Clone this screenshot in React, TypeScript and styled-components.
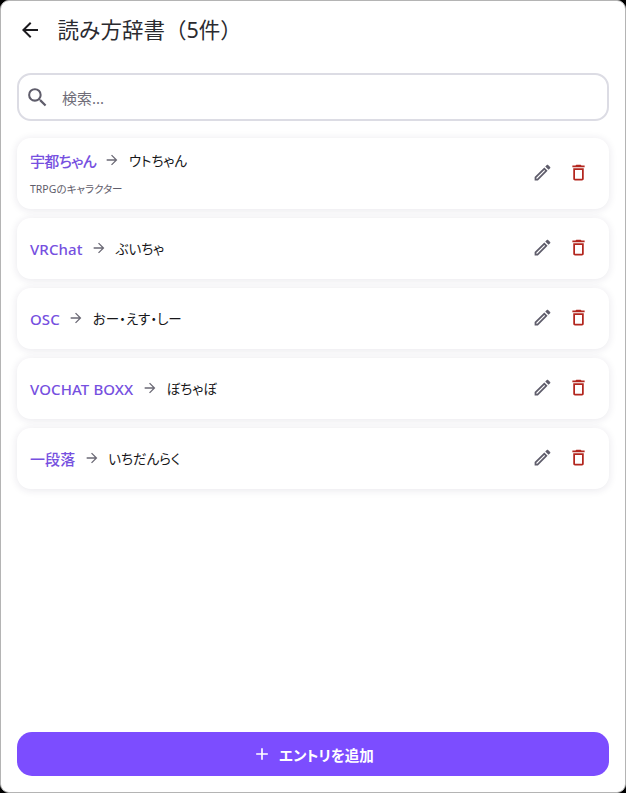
import React from "react";
import styled, { createGlobalStyle } from "styled-components";
import { MdArrowBack, MdSearch, MdOutlineEdit, MdDeleteOutline, MdArrowForward, MdAdd } from "react-icons/md";

const Global = createGlobalStyle`
  html, body { margin: 0; padding: 0; background: #000; }
  body { font-family: "Noto Sans", "Noto Sans CJK JP", sans-serif; font-feature-settings: "palt"; }
  * { box-sizing: border-box; }
`;

const Win = styled.div`
  width: 626px; height: 793px; background: #fff;
  border: 1px solid #b4b4b4; border-radius: 9px;
  display: flex; flex-direction: column;
  padding: 0 16px 16px; overflow: hidden;
`;
const Header = styled.header`
  display: flex; align-items: center; height: 58px; padding-left: 0.5px; gap: 16px; flex: none;
  color: #1c1b1f;
`;
const Title = styled.h1`
  margin: 0; font-size: 21.5px; font-weight: 400; color: #2b2b30; line-height: 1;
  font-feature-settings: normal;
`;
const Search = styled.div`
  margin-top: 14px; height: 48px; flex: none;
  border: 2px solid #dcdce4; border-radius: 14px;
  display: flex; align-items: center; padding-left: 6px; gap: 12px; color: #5f5d6b;
`;
const Placeholder = styled.span`
  font-size: 15px; color: #6f6d78;
`;
const List = styled.div`
  margin-top: 17px; display: flex; flex-direction: column; gap: 9px; flex: 1;
`;
const Card = styled.div<{ $tall?: boolean }>`
  height: ${p => (p.$tall ? 71 : 61)}px; border-radius: 14px; background: #fff;
  box-shadow: 0 1px 8px rgba(40, 30, 70, 0.11);
  display: flex; align-items: center; padding: 0 13px;
`;
const Body = styled.div`
  flex: 1; min-width: 0; display: flex; flex-direction: column; gap: 10px;
`;
const Row = styled.div`
  display: flex; align-items: center; gap: 8.5px; font-size: 15px; line-height: 20px;
`;
const Term = styled.span<{ $kana?: boolean }>`
  color: #7650e0; font-weight: 500;
  letter-spacing: ${p => (p.$kana ? "-0.7px" : "0.1px")};
`;
const Reading = styled.span`
  color: #17171a; font-weight: 400; font-size: 13.5px;
`;
const Note = styled.div`
  font-size: 10.5px; line-height: 16px; color: #5f5d6b;
`;
const Actions = styled.div`
  display: flex; align-items: center; margin-top: -2px;
`;
const Action = styled.span<{ $danger?: boolean }>`
  display: flex; align-items: center; justify-content: center; width: 36px; height: 36px;
  color: ${p => (p.$danger ? "#b3261e" : "#5f5d6b")};
`;
const Arrow = styled.span`
  display: flex; color: #6b6975; margin-top: -1px;
`;
const AddButton = styled.button`
  height: 44px; flex: none; border: 0; border-radius: 15px; background: #7c4dff; color: #fff;
  display: flex; align-items: center; justify-content: center; gap: 7px;
  font: 600 14.5px "Noto Sans", "Noto Sans CJK JP", sans-serif; font-feature-settings: "palt";
`;

const items: [string, string, string?][] = [
  ["宇都ちゃん", "ウトちゃん", "TRPGのキャラクター"],
  ["VRChat", "ぶいちゃ"],
  ["OSC", "おー・えす・しー"],
  ["VOCHAT BOXX", "ぼちゃぼ"],
  ["一段落", "いちだんらく"],
];

export default function App() {
  return (
    <>
      <Global />
      <Win>
        <Header>
          <MdArrowBack size={24} />
          <Title>読み方辞書（5件）</Title>
        </Header>
        <Search>
          <MdSearch size={25} />
          <Placeholder>検索...</Placeholder>
        </Search>
        <List>
          {items.map(([t, r, n]) => (
            <Card key={t} $tall={!!n}>
              <Body>
                <Row>
                  <Term $kana={/[ぁ-ん]/.test(t)}>{t}</Term>
                  <Arrow><MdArrowForward size={16} /></Arrow>
                  <Reading>{r}</Reading>
                </Row>
                {n && <Note>{n}</Note>}
              </Body>
              <Actions>
                <Action><MdOutlineEdit size={21} /></Action>
                <Action $danger><MdDeleteOutline size={21} /></Action>
              </Actions>
            </Card>
          ))}
        </List>
        <AddButton><MdAdd size={20} />エントリを追加</AddButton>
      </Win>
    </>
  );
}
